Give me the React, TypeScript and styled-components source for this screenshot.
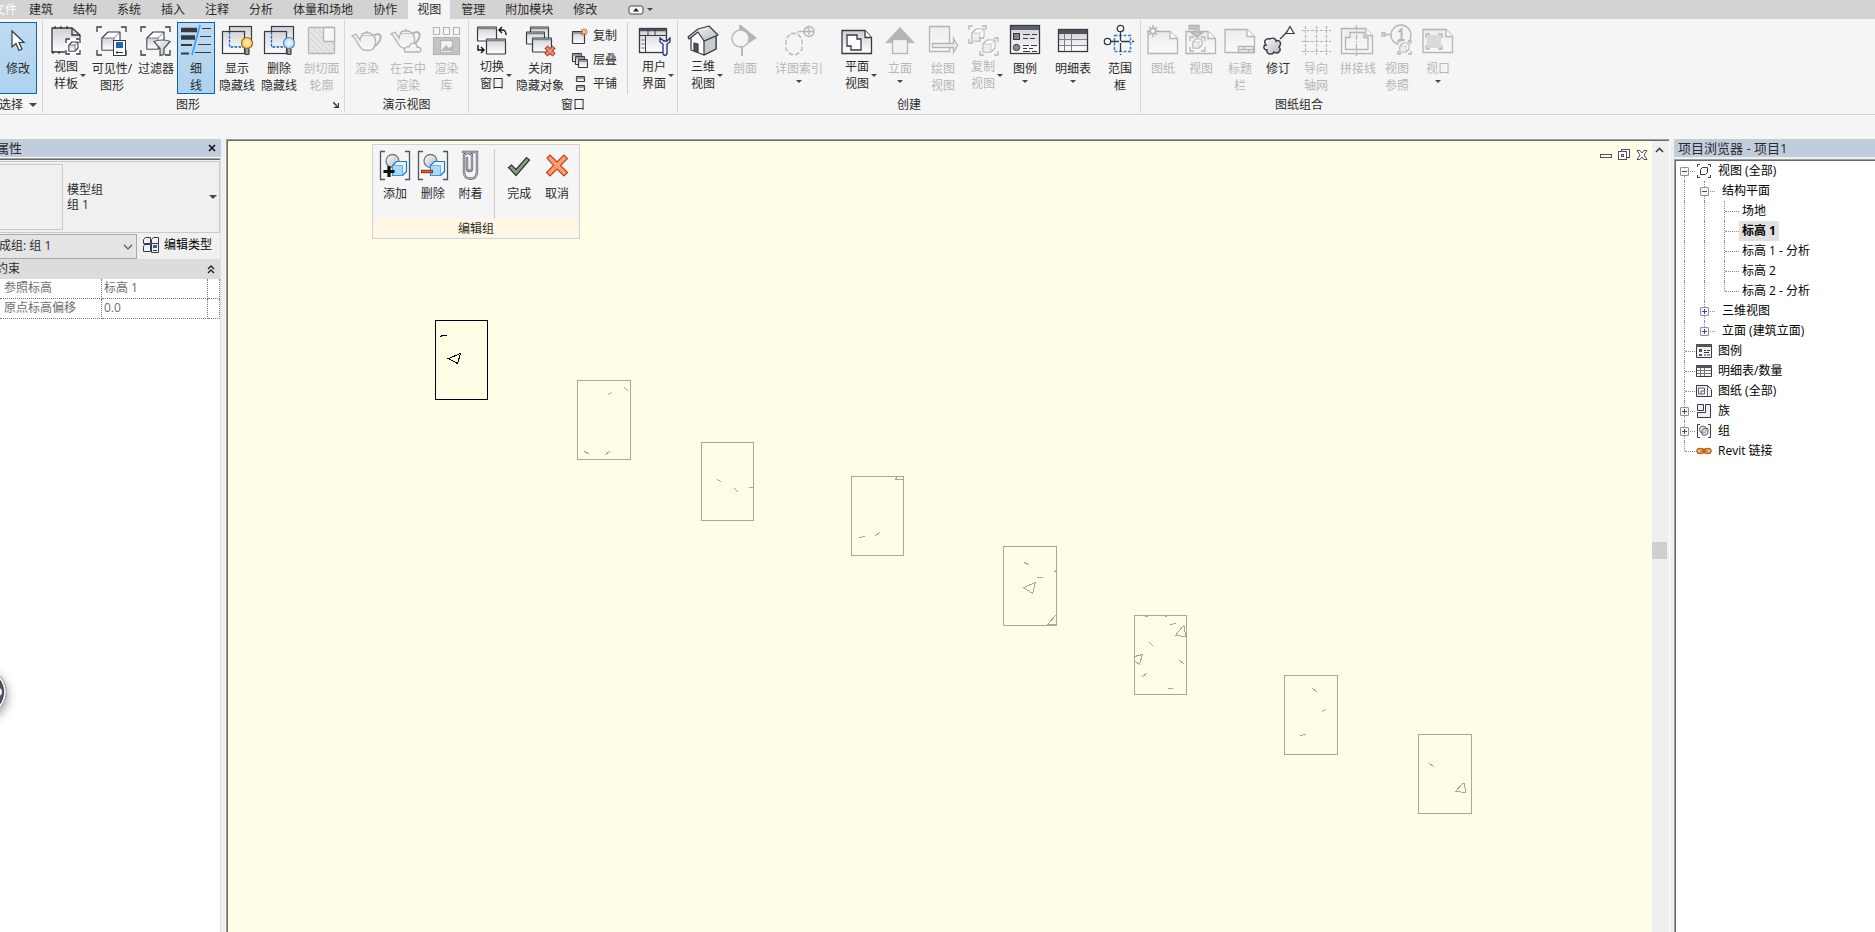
import React from 'react';
import styled, { createGlobalStyle } from 'styled-components';

const GlobalStyle = createGlobalStyle`
  *, *::before, *::after { box-sizing: border-box; }
  body {
    margin: 0;
    background: #f5f5f5;
    color: #2b2b2b;
    font: 12px/16px "Open Sans", "Noto Sans CJK SC", sans-serif;
  }
  button, select, input { font: inherit; color: inherit; }
  button { border: 0; padding: 0; background: none; }
`;

const INK = '#363a42';
const FAINT = '#b3b5b6';

/* ---------- page ---------- */

const Page = styled.div`
  display: flex;
  flex-direction: column;
  min-height: 100vh;
  overflow: hidden;
`;

const GradientStore = styled.svg`
  position: absolute;
  width: 0;
  height: 0;
`;

const TabBar = styled.nav`
  display: flex;
  gap: 2px;
  height: 19px;
  background: #d3d3d3;
  white-space: nowrap;
`;

const Tab = styled.button<{ $active?: boolean }>`
  padding: 0 9px;
  line-height: 18px;
  background: ${p => (p.$active ? '#f5f5f5' : 'transparent')};
`;

const FileTab = styled(Tab)`
  margin-left: -16px;
  padding-right: 1px;
  color: #fff;
`;

const CollapseButton = styled.button`
  display: flex;
  align-items: center;
  gap: 3px;
  margin-left: 20px;
`;

const Ribbon = styled.header`
  display: flex;
  height: 96px;
  padding-top: 1px;
  border-bottom: 1px solid #d0d1d2;
`;

const Group = styled.section`
  display: flex;
  flex-direction: column;
  flex: none;
  border-right: 1px solid #d6d7d8;
  margin-bottom: 1px;
  &:last-child { border-right: 0; padding-left: 0; }
`;

const GroupBody = styled.div`
  display: flex;
  height: 76px;
  padding: 2px 0;
`;

const GroupLabel = styled.div`
  display: flex;
  align-items: center;
  justify-content: center;
  height: 17px;
  line-height: 17px;
`;

const GroupTitle = styled.span`
  flex: 1;
  text-align: center;
`;

const SelectMenu = styled.button`
  display: flex;
  align-items: center;
  gap: 6px;
  margin-left: -6px;
`;

const Launcher = styled.button`
  display: flex;
  width: 11px;
  padding-top: 1px;
`;

const Tool = styled.button<{ $w: number; $active?: boolean }>`
  display: flex;
  flex-direction: column;
  align-items: center;
  width: ${p => p.$w}px;
  height: 72px;
  padding-top: 1px;
  border: 1px solid ${p => (p.$active ? '#0a63bd' : 'transparent')};
  background: ${p => (p.$active ? 'linear-gradient(#c0dbf2, #aed2ef)' : 'none')};
  &:disabled { color: #b6b7b8; }
`;

const ModifyTool = styled(Tool)`
  margin-left: -1px;
  margin-right: 5px;
`;

const ToolIcon = styled.svg`
  flex: none;
  display: block;
  width: 32px;
  height: 32px;
  overflow: visible;
`;

const ToolLabel = styled.span<{ $side?: boolean }>`
  display: grid;
  grid-template-columns: 1fr auto 1fr;
  align-items: center;
  width: 100%;
  margin-top: ${p => (p.$side ? 2 : 4)}px;
  line-height: 17px;
  white-space: pre;
  text-align: center;
`;

const LabelText = styled.span`
  grid-column: 2;
`;

const Arrow = styled.i<{ $side?: boolean; $size?: number }>`
  width: 0;
  height: 0;
  margin: ${p => (p.$side ? '0 0 0 2px' : '3px 0 0')};
  border: ${p => p.$size || 3}px solid transparent;
  border-top-color: #44474c;
  border-bottom: 0;
`;

const PlainArrow = styled(Arrow)`
  margin: 0;
`;

const SmallTools = styled.div`
  display: flex;
  flex-direction: column;
  width: 62px;
  padding-left: 5px;
`;

const SmallTool = styled.button`
  display: flex;
  align-items: center;
  gap: 5px;
  height: 24px;
  padding-top: 4px;
  svg { width: 18px; height: 18px; }
`;

const ToolDivider = styled.i`
  width: 1px;
  margin-right: 3px;
  background: #d0d1d2;
`;

const Workspace = styled.main`
  flex: 1;
  display: flex;
  margin-top: 24px;
  background: #f0f0f0;
`;

/* ---------- properties palette ---------- */

const Properties = styled.aside`
  position: relative;
  display: flex;
  flex-direction: column;
  flex: none;
  width: 221px;
  margin-right: 5px;
  border-right: 1px solid #e0e0e0;
  background: #fff;
`;

const PaletteTitle = styled.h2`
  display: flex;
  align-items: center;
  justify-content: space-between;
  height: 18px;
  margin: 0 -1px 0 0;
  padding: 0 5px 0 4px;
  background: #c0cddc;
  font-size: 13px;
  font-weight: 400;
  line-height: 18px;
`;

const CloseButton = styled.button`
  display: flex;
`;

const Clipped = styled.span<{ $by: number }>`
  margin-left: -${p => p.$by}px;
`;

const PaletteTop = styled.div`
  background: #f0f0f0;
  margin-top: 1px;
  border-top: 1px solid #a0a0a0;
  box-shadow: inset 0 1px #696969;
  padding-top: 2px;
`;

const TypeSelector = styled.div`
  display: flex;
  align-items: center;
  height: 72px;
  padding-right: 2px;
  border: 1px solid #c9cacb;
  border-left: 0;
`;

const Thumbnail = styled.div`
  width: 63px;
  height: 66px;
  margin-right: 4px;
  border: 1px solid #c9cacb;
  border-left: 0;
`;

const TypeName = styled.div`
  flex: 1;
  line-height: 15px;
`;

const InstanceRow = styled.div`
  display: flex;
  align-items: center;
  gap: 6px;
  height: 26px;
`;

const InstanceField = styled.label`
  position: relative;
  display: flex;
  width: 137px;
  svg { position: absolute; right: 4px; top: 9px; pointer-events: none; }
`;

const InstanceSelect = styled.select`
  appearance: none;
  width: 100%;
  height: 25px;
  margin: 0;
  padding: 0 18px 0 0;
  border: 1px solid #a9aaa6;
  border-left: 0;
  border-radius: 0;
  background: #e4e4e4;
  text-indent: -1px;
`;

const EditType = styled.button`
  display: flex;
  align-items: center;
  gap: 5px;
  padding-bottom: 2px;
  color: #000;
`;

const Category = styled.div`
  display: flex;
  align-items: center;
  justify-content: space-between;
  height: 20px;
  padding-right: 5px;
  background: #dcdcdc;
`;

const PropertyTable = styled.table`
  width: 220px;
  border-collapse: separate;
  border-spacing: 0;
  table-layout: fixed;
  color: #6d6d6d;
  th, td {
    height: 20px;
    padding: 0 0 1px 2px;
    border-right: 1px dotted #777;
    border-bottom: 1px dotted #777;
    font-weight: 400;
    text-align: left;
    line-height: 18px;
  }
  th { width: 102px; padding-left: 4px; }
  td:last-child { width: 12px; }
`;

const RecorderBadge = styled.div`
  position: absolute;
  left: -41px;
  top: 529px;
  width: 48px;
  height: 48px;
  border: 1px solid #b9b9b9;
  border-radius: 50%;
  background: #505860;
  box-shadow: inset 0 0 0 2px #f2f2f2, inset 0 0 0 3px #2b3950, 1px 4px 10px rgba(0, 0, 0, 0.35);
  &::after {
    content: '';
    position: absolute;
    right: 4px;
    top: 19px;
    width: 8px;
    height: 8px;
    border-radius: 4px;
    background: #fff;
  }
`;

/* ---------- drawing area ---------- */

const ViewWindow = styled.section`
  flex: 1;
  display: flex;
  min-width: 0;
  border-top: 1px solid #a0a0a0;
  border-left: 1px solid #a0a0a0;
  border-right: 1px solid #fff;
  box-shadow: inset 1px 1px #696969;
  padding: 1px 0 0 1px;
`;

const Canvas = styled.div`
  position: relative;
  flex: 1;
  min-width: 0;
  background: #fffde5;
  border-right: 1px solid #fff;
`;

const Frame = styled.svg`
  position: absolute;
  overflow: visible;
`;

const EditPanel = styled.section`
  position: absolute;
  left: 144px;
  top: 3px;
  width: 208px;
  border: 1px solid #cfd2d4;
  background: #f5f5f5;
`;

const EditTools = styled.div`
  display: flex;
  height: 74px;
  padding: 4px 3px 0;
`;

const EditTool = styled.button`
  display: flex;
  flex-direction: column;
  align-items: center;
  gap: 4px;
  width: 38px;
  line-height: 17px;
`;

const EditDivider = styled.i`
  width: 1px;
  margin: 0 5px;
  background: #cbcccd;
`;

const EditTitle = styled.div`
  height: 18px;
  margin: 0 1px 1px;
  background: #fff7e3;
  line-height: 19px;
  text-align: center;
`;

const WindowButtons = styled.div`
  position: absolute;
  top: 8px;
  right: 3px;
  display: flex;
  gap: 6px;
  button { display: flex; }
`;

const ScrollBar = styled.div`
  display: flex;
  flex-direction: column;
  width: 17px;
  background: #efefef;
`;

const ScrollUp = styled.button`
  height: 18px;
  padding-right: 2px;
  svg { display: block; margin: auto; }
`;

const Track = styled.div`
  flex: 1;
  padding-top: 383px;
`;

const Thumb = styled.div`
  width: 15px;
  height: 17px;
  background: #cdcfd0;
`;

/* ---------- project browser ---------- */

const Browser = styled.aside`
  display: flex;
  flex-direction: column;
  flex: none;
  width: 201px;
  margin-left: 4px;
`;

const Tree = styled.div`
  flex: 1;
  margin-top: 2px;
  border-top: 1px solid #a0a0a0;
  border-left: 1px solid #a0a0a0;
  box-shadow: inset 1px 1px #696969;
  padding: 1px 0 0 1px;
  background: #fff;
`;

const TreeRow = styled.div`
  display: flex;
  align-items: center;
  height: 20px;
  color: #000;
  white-space: pre;
`;

type GuideKind = 'none' | 'pipe' | 'tee' | 'elbow' | 'start';

const Guide = styled.span<{ $kind: GuideKind; $long?: boolean }>`
  position: relative;
  flex: none;
  width: 20px;
  height: 20px;
  &::before {
    content: '';
    position: absolute;
    left: 8px;
    top: ${p => (p.$kind === 'start' ? 10 : 0)}px;
    height: ${p => (p.$kind === 'elbow' || p.$kind === 'start' ? 10 : 20)}px;
    border-left: ${p => (p.$kind === 'none' ? 0 : 1)}px dotted #8c8c8c;
  }
  &::after {
    content: '';
    position: absolute;
    left: 9px;
    top: 10px;
    width: ${p => (p.$long ? 14 : 10)}px;
    border-top: ${p => (p.$kind === 'none' || p.$kind === 'pipe' ? 0 : 1)}px dotted #8c8c8c;
  }
`;

const Expander = styled.button`
  position: absolute;
  z-index: 1;
  left: 4px;
  top: 6px;
  display: flex;
  width: 9px;
  height: 9px;
  border: 1px solid #919191;
  border-radius: 1px;
  background: #f6f6f6;
`;

const TreeIcon = styled.svg`
  flex: none;
  width: 16px;
  height: 16px;
  background: #fff;
`;

const TreeLabel = styled.span<{ $selected?: boolean }>`
  margin-left: 3px;
  padding: 0 3px;
  line-height: 20px;
  font-weight: ${p => (p.$selected ? 700 : 400)};
  background: ${p => (p.$selected ? '#e1e1e1' : 'transparent')};
`;

/* ---------- icons ---------- */

const Defs = () => (
  <GradientStore aria-hidden="true">
    <defs>
      <linearGradient id="pane" x1="0" y1="0" x2="0" y2="1">
        <stop offset="0" stopColor="#cfd0d6" /><stop offset="1" stopColor="#ffffff" />
      </linearGradient>
      <linearGradient id="paneFaint" x1="0" y1="0" x2="0" y2="1">
        <stop offset="0" stopColor="#ececec" /><stop offset="1" stopColor="#fafafa" />
      </linearGradient>
      <linearGradient id="metal" x1="0" y1="0" x2="1" y2="1">
        <stop offset="0" stopColor="#ffffff" /><stop offset="1" stopColor="#b2b5ba" />
      </linearGradient>
      <radialGradient id="gold"><stop offset="0" stopColor="#fff6cc" /><stop offset="1" stopColor="#fbc64b" /></radialGradient>
      <radialGradient id="blueBulb"><stop offset="0" stopColor="#ffffff" /><stop offset="1" stopColor="#a9d5f7" /></radialGradient>
    </defs>
  </GradientStore>
);

const Brackets = ({ x, y, w, h, l = 6, c = INK }: { x: number; y: number; w: number; h: number; l?: number; c?: string }) => (
  <path fill="none" stroke={c} strokeWidth="1.3"
    d={`M${x} ${y + l}v${-l}h${l}M${x + w - l} ${y}h${l}v${l}M${x + w} ${y + h - l}v${l}h${-l}M${x + l} ${y + h}h${-l}v${-l}`} />
);

const Cube = ({ x, y, s, c = INK, f = 'url(#pane)' }: { x: number; y: number; s: number; c?: string; f?: string }) => {
  const d = Math.round(s * 0.35);
  return (
    <g stroke={c} strokeWidth="1.1" strokeLinejoin="round">
      <path fill="#fff" d={`M${x} ${y + d}l${d} ${-d}h${s - d}v${s - d}l${-d} ${d}h${d - s}z`} />
      <path fill={f} d={`M${x} ${y + d}h${s - d}v${s - d}h${d - s}z`} strokeOpacity="0.6" />
      <path fill="none" strokeOpacity="0.4" d={`M${x + s - d} ${y + d}l${d} ${-d}`} />
    </g>
  );
};

const Bulb = ({ fill, line }: { fill: string; line: string }) => (
  <g strokeWidth="1.2">
    <rect x="24" y="24" width="4" height="6.5" rx="1" fill="#9ba0a6" stroke={INK} />
    <circle cx="26" cy="19" r="5.5" fill={fill} stroke={line} />
  </g>
);

const hiddenLines = (bulb: React.ReactNode) => (
  <g>
    <rect x="8.5" y="2.5" width="22" height="20" fill="url(#pane)" stroke={INK} strokeWidth="1.2" />
    <rect x="1.5" y="7.5" width="22" height="22" fill="url(#pane)" fillOpacity="0.8" stroke={INK} strokeWidth="1.2" />
    <path d="M8.500 8v15h14" fill="none" stroke="#1567c2" strokeWidth="1.3" strokeDasharray="2.5 1.5" />
    {bulb}
  </g>
);

const Teapot = ({ x = 0, y = 0 }: { x?: number; y?: number }) => (
  <g transform={`translate(${x} ${y})`} stroke={FAINT} strokeWidth="1.3" fill="url(#paneFaint)">
    <path d="M22 12c6-4 9-1 7 4-1 3-5 6-7 7" fill="none" strokeWidth="2" />
    <path d="M1 12l4-2 4 6c0-3 1-4 3-5h10c4 4 3 10 0 14-3 2-8 2-11 0-5-4-5-10-10-13z" />
    <path d="M10 11c3-3 9-3 12 0M15 8h2" />
  </g>
);

const Win = ({ x, y, w, h }: { x: number; y: number; w: number; h: number }) => (
  <g>
    <rect x={x} y={y} width={w} height={h} rx="0.5" fill="url(#pane)" stroke={INK} strokeWidth="1.2" />
    <path d={`M${x} ${y + 1.5}h${w}`} stroke="#7d8188" strokeWidth="1.5" />
  </g>
);

const sheetD = 'M1 7.500h22l7.500 7v15H1z';

const solid = (mark: React.ReactNode) => (
  <g>
    <path d="M6 2.500H1.500v28H6M26 2.500h4.500v28H26" fill="none" stroke="#50555e" strokeWidth="1.3" />
    <circle cx="13.500" cy="12" r="6.500" fill="url(#metal)" stroke="#747982" strokeWidth="1.3" />
    <path d="M13.500 16.500l4-4h10v10l-4 4h-10z" fill="#eaf6ff" stroke="#187bd0" strokeWidth="1.2" strokeLinejoin="round" />
    <path d="M13.500 16.500h10v10h-10z" fill="#a9d8fa" stroke="#187bd0" strokeOpacity="0.5" />
    {mark}
  </g>
);

const icons: Record<string, React.ReactNode> = {
  cursor: <path d="M10 7v16l4-3.500 3 7 3-1.500-3-6.500h5z" fill="#fff" stroke={INK} strokeWidth="1.2" />,
  template: (
    <g stroke={INK} strokeWidth="1.3">
      <path d="M2 4h20l8 7v17H2z" fill="url(#pane)" />
      <path d="M22 4v7h8M5 2v3M11 2v3M17 2v3M3 27v3M9 27v3" fill="none" />
      <rect x="15" y="14" width="17" height="18" fill="#fff" stroke="none" />
      <Brackets x={16} y={15} w={14} h={15} l={4} />
      <Cube x={19} y={18} s={9} />
    </g>
  ),
  visibility: (
    <g>
      <Brackets x={1} y={3} w={29} h={28} l={5} />
      <Cube x={6} y={8} s={18} />
      <rect x="17.5" y="16.5" width="12" height="15" fill="#fff" stroke={INK} />
      <rect x="20" y="18" width="7" height="6" fill="#2563b8" />
      <path d="M20 28.500h7M21 27v3" stroke={INK} />
    </g>
  ),
  filter: (
    <g>
      <Brackets x={1} y={3} w={29} h={28} l={5} />
      <Cube x={7} y={8} s={17} />
      <path d="M14 17.500c4-2 13-2 16 0l-6 7v6l-4 1v-7z" fill="url(#metal)" stroke="#4b4f57" strokeWidth="1.2" />
    </g>
  ),
  thin: (
    <g>
      <path d="M1 6h16M1 13.500h14" stroke={INK} strokeWidth="4.5" />
      <path d="M1 21h11M1 29.500h8" stroke={INK} strokeWidth="2.2" />
      <path d="M22 4.500h9M20 12.500h11M18 20.500h13M15 28.500h16" stroke={INK} strokeWidth="1.2" />
      <path d="M20 1L12 31" stroke="#4aa3ee" strokeWidth="1.8" />
    </g>
  ),
  showHidden: hiddenLines(<Bulb fill="url(#gold)" line="#a9690f" />),
  removeHidden: hiddenLines(<Bulb fill="url(#blueBulb)" line="#4f8cc4" />),
  cutProfile: (
    <g stroke={FAINT} strokeWidth="1.3" fill="none">
      <rect x="2.5" y="3.5" width="26" height="26" rx="1" fill="#e6e6e6" />
      <path d="M4 8l21 21M4 14l15 15M4 20l9 9M8 6l20 20M12 5l16 16M4 25l4 4" strokeOpacity="0.5" strokeWidth="1" />
      <path d="M17.500 3.500h11v14h-11z" fill="#f7f7f7" />
    </g>
  ),
  teapot: <Teapot />,
  cloudTeapot: (
    <g>
      <Teapot x={-1} y={-2} />
      <path d="M14 28c-2-4 2-6 4-5 2-6 8-4 8 0 5 0 5 5 2 5z" fill="#f5f5f5" stroke={FAINT} strokeWidth="1.3" />
    </g>
  ),
  gallery: (
    <g stroke={FAINT} strokeWidth="1.2">
      <path d="M2.500 3.500h6v7h-6zM12.500 3.500h6v7h-6zM22.500 3.500h6v7h-6z" fill="#f8f8f8" />
      <rect x="2.5" y="13.5" width="26" height="17" fill="#c3c4c5" />
      <rect x="9.5" y="16.5" width="12" height="12" fill="#f4f4f4" />
      <path d="M10 27l5-6 3 3 3-2v5z" fill="#b5b6b7" stroke="none" />
    </g>
  ),
  switchWin: (
    <g>
      <Win x={1.5} y={3} w={19} h={14} /><Win x={10.5} y={15} w={19} h={15} />
      <path d="M23 6h3c3 0 4 1 4 5M26 3l-3 3 3 3M2 21v5h6M5 23l3 3-3 3" fill="none" stroke="#111" strokeWidth="1.4" />
    </g>
  ),
  closeHidden: (
    <g>
      <Win x={6.5} y={3} w={18} h={12} /><Win x={2.5} y={8} w={18} h={12} /><Win x={8.5} y={14} w={19} h={14} />
      <path d="M22 23l8 8M30 23l-8 8" stroke="#9c2d16" strokeWidth="4.5" />
      <path d="M22.500 23.500l7 7M29.500 23.500l-7 7" stroke="#f58a68" strokeWidth="2.5" />
    </g>
  ),
  userInterface: (
    <g>
      <rect x="1.5" y="4.5" width="27" height="24" fill="url(#pane)" stroke={INK} strokeWidth="1.3" />
      <path d="M2 6h27" stroke="#4c5058" strokeWidth="2.5" />
      <path d="M2 11.500h26M7.500 11.500v17M10 5v6M17 5v6" stroke={INK} />
      <path d="M3.500 16h3M3.500 20h3M3.500 24h3" stroke="#666" />
      <path d="M22 14v4l3 2v9c0 3 4 3 4 0v-9l3-2v-4l-3 3h-3z" fill="#eef1fa" stroke="#27306c" strokeWidth="1.3" />
    </g>
  ),
  house: (
    <g stroke={INK} strokeWidth="1.2" strokeLinejoin="round">
      <path d="M4 13v13l13 5 12-6V13L13 5z" fill="#fdfdfd" />
      <path d="M17 17v14l12-6V12z" fill="#c7ccd0" />
      <path d="M1 13L11 5l11-3 9 9-14 6-6-9-9 7z" fill="url(#metal)" />
      <path d="M7 19l4 1v8l-4-1.500z" fill="#4f5560" />
    </g>
  ),
  section: (
    <g>
      <path d="M10 1h2l16 13-14 9v9h-2V24z" fill={FAINT} />
      <circle cx="11.500" cy="14.500" r="8.500" fill="#f4f4f4" stroke={FAINT} strokeWidth="1.3" />
    </g>
  ),
  callout: (
    <g stroke={FAINT} strokeWidth="1.3" fill="none">
      <path d="M8 9.500h6l5 5v11l-5 5H8l-5-5v-11z" strokeDasharray="5 2" />
      <path d="M14 8.500l3-1h14" /><circle cx="26" cy="7.500" r="5" /><path d="M26 4v7M24 5l2-1" />
    </g>
  ),
  plan: (
    <g stroke={INK} strokeWidth="1.3">
      <path d="M1 6.500h23l6.500 7v16H1z" fill="url(#pane)" /><path d="M24 6.500v7h6.500" fill="#fff" />
      <path d="M6 11h10v4h4v11h-10v-4H6z" fill="#fff" />
    </g>
  ),
  elevation: (
    <g><path d="M16 3L31 19H1z" fill={FAINT} /><rect x="8.5" y="15.5" width="15" height="14" fill="#f1f1f1" stroke={FAINT} strokeWidth="1.3" /></g>
  ),
  drafting: (
    <g stroke={FAINT} strokeWidth="1.3">
      <path d="M2.500 2.500h20v25h-20z" fill="url(#paneFaint)" />
      <path d="M5.500 19.500h21v-5l4 7-4 7v-5h-21z" fill="#f0f0f0" />
    </g>
  ),
  duplicate: (
    <g>
      <Brackets x={1} y={2} w={17} h={17} l={4} c={FAINT} /><Cube x={4} y={5} s={12} c={FAINT} f="#eee" />
      <rect x="12" y="14" width="18" height="17" fill="#f5f5f5" />
      <Brackets x={12} y={14} w={18} h={17} l={4} c={FAINT} /><Cube x={15} y={16} s={12} c={FAINT} f="#eee" />
    </g>
  ),
  legend: (
    <g>
      <rect x="1.5" y="1.5" width="29" height="28" fill="url(#pane)" stroke={INK} strokeWidth="1.3" />
      <path d="M2 4h28" stroke="#5b5f66" strokeWidth="4" />
      <rect x="4.5" y="9.5" width="6" height="6" fill="#7e8289" stroke={INK} />
      <circle cx="7.500" cy="23.500" r="3.2" fill="#8b8f95" stroke={INK} />
      <path d="M14 10.500h7M23 10.500h5M14 14.500h5M21 14.500h5M14 21.500h6M22 21.500h6M14 24.500h4M20 24.500h4M14 27.500h7M23 27.500h5" stroke={INK} />
    </g>
  ),
  schedule: (
    <g>
      <rect x="1.5" y="5.5" width="29" height="22" fill="url(#pane)" stroke={INK} strokeWidth="1.3" />
      <path d="M2 8h28" stroke="#50545c" strokeWidth="4" />
      <path d="M2 15.500h28M2 21.500h28M7.500 10v17M14.500 10v17" stroke="#7b7f86" />
    </g>
  ),
  scopeBox: (
    <g fill="none" stroke={INK} strokeWidth="1.3">
      <rect x="10.5" y="11.5" width="16" height="16" stroke="#2f87d6" strokeWidth="1.5" strokeDasharray="3 1.5" />
      <path d="M6 17.500h24M16.500 8v23" strokeDasharray="9 2" />
      <circle cx="16.500" cy="4.500" r="3.2" fill="#fff" /><circle cx="3.500" cy="17.500" r="3.2" fill="#fff" />
    </g>
  ),
  sheet: (
    <g stroke={FAINT} strokeWidth="1.3">
      <path d={sheetD} fill="url(#paneFaint)" /><path d="M23 7.500v7h7.500" fill="#fff" />
      <path d="M6 1v12M0 7h12M2 3l8 8M10 3l-8 8" strokeWidth="1.5" /><circle cx="6" cy="7" r="2.5" fill="#fff" />
    </g>
  ),
  placeView: (
    <g stroke={FAINT} strokeWidth="1.3">
      <path d={sheetD} fill="url(#paneFaint)" /><path d="M23 7.500v7h7.500" fill="#fff" />
      <path d="M4 1.500h10v7h4l-6 5-6-5h4V5H4z" fill="#c4c5c6" />
      <Brackets x={5} y={13} w={15} h={14} l={4} c={FAINT} /><Cube x={8} y={15} s={9} c={FAINT} f="#eee" />
    </g>
  ),
  titleBlock: (
    <g stroke={FAINT} strokeWidth="1.3">
      <path d="M1 5.500h22l7.500 7v16H1z" fill="url(#paneFaint)" /><path d="M23 5.500v7h7.500" fill="#fff" />
      <path d="M14.500 22.500h15v6h-15zM14.500 25.500h15M20 22.500v3M25 25.500v3" fill="none" />
    </g>
  ),
  revision: (
    <g stroke={INK} strokeWidth="1.2">
      <path d="M18 15l8-8" /><path d="M28 2.500l4 7h-8z" fill="#fff" />
      <path d="M9 15c3-2 6 0 6 2 4-2 6 3 3 6 3 3-1 8-5 5-1 3-8 3-7-2-4 0-4-5-1-5-3-4 0-7 4-6z" fill="url(#metal)" strokeWidth="1.4" transform="translate(-1 0)" />
    </g>
  ),
  guideGrid: (
    <path d="M5.500 2v29M16.500 2v29M26.500 2v29M2 6.500h29M2 17.500h29M2 27.500h29" fill="none" stroke={FAINT} strokeWidth="1.2" strokeDasharray="3 1.5" />
  ),
  matchline: (
    <g stroke={FAINT} strokeWidth="1.3" fill="none">
      <path d="M.5 4.500h24l7 7v18H.5z" fill="url(#paneFaint)" /><path d="M25 4.500v7h6.500" fill="#fff" />
      <path d="M9 8.500h14v5h4v12H4.500v-12H9z" /><path d="M15.500 1v31" strokeDasharray="5 1.5 1.5 1.5" />
    </g>
  ),
  viewRef: (
    <g stroke={FAINT} strokeWidth="1.3" fill="#f3f3f3">
      <circle cx="20" cy="11" r="10" /><path d="M4 10.500h6M1 9h3v3H1z" />
      <path d="M17.500 8l3-2.500V16M17.500 16h6" fill="none" strokeWidth="2" />
      <rect x="17" y="17" width="14" height="14" stroke="none" fill="#f5f5f5" />
      <Brackets x={17} y={17} w={13} h={13} l={3} c={FAINT} /><Cube x={19} y={19} s={9} c={FAINT} f="#eee" />
    </g>
  ),
  viewport: (
    <g stroke={FAINT} strokeWidth="1.3">
      <path d="M1 5.500h23l6.500 7v16H1z" fill="url(#paneFaint)" /><path d="M24 5.500v7h6.500" fill="#fff" />
      <rect x="5" y="11" width="14" height="13" fill="#d9dadb" stroke="none" /><Brackets x={4} y={10} w={16} h={15} l={4} c={FAINT} />
    </g>
  ),
  addToGroup: solid(<path d="M10 17v11M4.500 22.500h11" stroke="#0b130c" strokeWidth="3.2" />),
  removeFromGroup: solid(
    <g>
      <path d="M4 22.500h12" stroke="#8f2f18" strokeWidth="3.4" />
      <path d="M5 22.500h10" stroke="#e0694a" strokeWidth="1.4" />
    </g>
  ),
  attach: (
    <g fill="none" strokeLinecap="round">
      <path d="M13 9v10c0 4 5 4 5 0V7c0-4-8-4-8 0v16c0 9 13 9 13 0V3H9" stroke="#5a5e65" strokeWidth="2.4" />
      <path d="M13 9v10c0 4 5 4 5 0V7c0-4-8-4-8 0v16c0 9 13 9 13 0V3H9" stroke="#d8dadc" strokeWidth="0.9" />
    </g>
  ),
  finish: <path d="M5.500 18.500l3-2.500 4.500 4.500L23.500 8.500l3 2.500L13 26.500z" fill="#8c9d89" stroke="#2c382e" strokeWidth="1.2" />,
  cancel: <path d="M6 9l3-3 7 7 7-7 3.500 3.500-7 7 7 7L23 27l-7-7-7 7-3.500-3.500 7-7z" fill="#ff9c72" stroke="#b5401c" strokeWidth="1.1" />,
};

const treeIcons: Record<string, React.ReactNode> = {
  views: <g><path d="M1.500 4V1.500H4M12 1.500h2.500V4M14.500 12v2.500H12M4 14.500H1.500V12" fill="none" stroke={INK} /><path d="M4.500 6.500l2-2h5v5l-2 2h-5z" fill="#fff" stroke={INK} /></g>,
  legend: <g><path d="M.5 1.500h15v13H.5z" fill="#f3f3f5" stroke={INK} /><path d="M0 2.500h16" stroke="#50545c" strokeWidth="3" /><path d="M3 6h3v3H3zM3 11h3v2H3z" fill="#555" /><path d="M8 7.500h2M11 7.500h3M8 9.500h5M8 12h2M11 12h3" stroke={INK} /></g>,
  schedule: <g><path d="M.5 2.500h15v11H.5z" fill="#f3f3f5" stroke={INK} /><path d="M0 3.500h16" stroke="#50545c" strokeWidth="3" /><path d="M1 7.500h14M1 10.500h14M4.500 5v8M8.500 5v8" stroke="#777" /></g>,
  sheets: <g fill="none" stroke={INK}><path d="M.5 2.500h11l4 4v7H.5z" fill="#f3f3f5" /><path d="M11.500 2.500v11M2.500 5h6v6h-6zM5 11V8h3" stroke="#666" /></g>,
  families: <g fill="#f1f1f4" stroke={INK}><path d="M1.500 1.500h6v6h-6zM9.500 1.500h5v13h-13v-5h8z" /></g>,
  groups: <g fill="none" stroke={INK}><path d="M4 1.500H1.500v13H4M12 1.500h2.500v13H12" /><circle cx="7" cy="6.500" r="3.5" fill="#e5e5e8" stroke="#666" /><path d="M6 7l2-1.500h4V10l-1.500 2H6z" fill="#ccc" fillOpacity="0.6" stroke="#666" /></g>,
  link: <g fill="#f9d6a0" stroke="#b8641a" strokeWidth="1.5"><ellipse cx="4.500" cy="8" rx="3.5" ry="2.5" /><ellipse cx="11.500" cy="8" rx="3.5" ry="2.5" /><path d="M4 8h8" /></g>,
};

/* ---------- data ---------- */

type ToolSpec = { icon: string; label: string; w: number; off?: boolean; active?: boolean; menu?: 'side' | 'below' };

const graphics: ToolSpec[] = [
  { icon: 'template', label: '视图\n样板', w: 46, menu: 'side' },
  { icon: 'visibility', label: '可见性/\n图形', w: 46 },
  { icon: 'filter', label: '过滤器', w: 42 },
  { icon: 'thin', label: '细\n线', w: 38, active: true },
  { icon: 'showHidden', label: '显示\n隐藏线', w: 44 },
  { icon: 'removeHidden', label: '删除\n隐藏线', w: 40 },
  { icon: 'cutProfile', label: '剖切面\n轮廓', w: 45, off: true },
];
const presentation: ToolSpec[] = [
  { icon: 'teapot', label: '渲染', w: 44, off: true },
  { icon: 'cloudTeapot', label: '在云中\n渲染', w: 36, off: true },
  { icon: 'gallery', label: '渲染\n库', w: 43, off: true },
];
const windows: ToolSpec[] = [
  { icon: 'switchWin', label: '切换\n窗口', w: 46, menu: 'side' },
  { icon: 'closeHidden', label: '关闭\n隐藏对象', w: 50 },
];
const create: ToolSpec[] = [
  { icon: 'house', label: '三维\n视图', w: 50, menu: 'side' },
  { icon: 'section', label: '剖面', w: 34, off: true },
  { icon: 'callout', label: '详图索引', w: 74, off: true, menu: 'below' },
  { icon: 'plan', label: '平面\n视图', w: 42, menu: 'side' },
  { icon: 'elevation', label: '立面', w: 44, off: true, menu: 'below' },
  { icon: 'drafting', label: '绘图\n视图', w: 42, off: true },
  { icon: 'duplicate', label: '复制\n视图', w: 40, off: true, menu: 'side' },
  { icon: 'legend', label: '图例', w: 42, menu: 'below' },
  { icon: 'schedule', label: '明细表', w: 54, menu: 'below' },
  { icon: 'scopeBox', label: '范围\n框', w: 40 },
];
const sheets: ToolSpec[] = [
  { icon: 'sheet', label: '图纸', w: 44, off: true },
  { icon: 'placeView', label: '视图', w: 32, off: true },
  { icon: 'titleBlock', label: '标题\n栏', w: 46, off: true },
  { icon: 'revision', label: '修订', w: 30 },
  { icon: 'guideGrid', label: '导向\n轴网', w: 46, off: true },
  { icon: 'matchline', label: '拼接线', w: 36, off: true },
  { icon: 'viewRef', label: '视图\n参照', w: 44, off: true },
  { icon: 'viewport', label: '视口', w: 38, off: true, menu: 'below' },
];

const frames = [
  { x: 207, y: 179, w: 52, h: 79, active: true, d: 'M5 16h1M6 15H11M13 38L25 33L22 43Z' },
  { x: 349, y: 239, w: 53, h: 79, d: 'M31 14L34 12M47 7L50 10M7 71L11 73M28 74L32 71' },
  { x: 473, y: 301, w: 52, h: 78, d: 'M16 37L19 39M33 46L36 49M48 45H52' },
  { x: 623, y: 335, w: 52, h: 79, d: 'M45 1L44 3H52M8 61L13 60M24 59L28 56' },
  { x: 775, y: 405, w: 53, h: 79, d: 'M21 16L25 18M34 31H39M51 25L53 24M20 41L32 36L29 47ZM53 68L44 78H53' },
  { x: 906, y: 474, w: 52, h: 79, d: 'M11 1H13M31 1H32M36 9L41 8M41 20L48 11H50L51 21ZM15 27L18 30M0 41L8 39L5 49L1 46M45 45L49 48M8 61L12 58M34 73H38' },
  { x: 1056, y: 534, w: 53, h: 79, d: 'M28 13L32 16M38 36L41 34M16 60L21 59' },
  { x: 1190, y: 593, w: 53, h: 79, d: 'M11 29L15 32M37 57L44 49H46L47 58Z' },
];

type Node = { guides: GuideKind[]; label: string; icon?: string; toggle?: '+' | '-'; selected?: boolean };

const tree: Node[] = [
  { guides: ['start'], label: '视图 (全部)', icon: 'views', toggle: '-' },
  { guides: ['pipe', 'tee'], label: '结构平面', toggle: '-' },
  { guides: ['pipe', 'pipe', 'tee'], label: '场地' },
  { guides: ['pipe', 'pipe', 'tee'], label: '标高 1', selected: true },
  { guides: ['pipe', 'pipe', 'tee'], label: '标高 1 - 分析' },
  { guides: ['pipe', 'pipe', 'tee'], label: '标高 2' },
  { guides: ['pipe', 'pipe', 'elbow'], label: '标高 2 - 分析' },
  { guides: ['pipe', 'tee'], label: '三维视图', toggle: '+' },
  { guides: ['pipe', 'elbow'], label: '立面 (建筑立面)', toggle: '+' },
  { guides: ['tee'], label: '图例', icon: 'legend' },
  { guides: ['tee'], label: '明细表/数量', icon: 'schedule' },
  { guides: ['tee'], label: '图纸 (全部)', icon: 'sheets' },
  { guides: ['tee'], label: '族', icon: 'families', toggle: '+' },
  { guides: ['tee'], label: '组', icon: 'groups', toggle: '+' },
  { guides: ['elbow'], label: 'Revit 链接', icon: 'link' },
];

const tabs = ['建筑', '结构', '系统', '插入', '注释', '分析', '体量和场地', '协作', '视图', '管理', '附加模块', '修改'];

/* ---------- parts ---------- */

const Icon = ({ name }: { name: string }) => (
  <ToolIcon viewBox="0 0 32 32" aria-hidden="true">{icons[name]}</ToolIcon>
);

const RibbonTool = ({ icon, label, w, off, active, menu }: ToolSpec) => (
  <Tool $w={w} $active={active} disabled={off}>
    <Icon name={icon} />
    <ToolLabel $side={menu === 'side'}>
      <LabelText>{label}</LabelText>
      {menu === 'side' && <Arrow $side />}
    </ToolLabel>
    {menu === 'below' && <Arrow />}
  </Tool>
);

const ToolGroup = ({ title, tools, launcher, children }: { title: string; tools: ToolSpec[]; launcher?: boolean; children?: React.ReactNode }) => (
  <Group>
    <GroupBody>
      {tools.map(t => <RibbonTool key={t.icon} {...t} />)}
      {children}
    </GroupBody>
    <GroupLabel>
      <GroupTitle>{title}</GroupTitle>
      {launcher && (
        <Launcher aria-label="图形显示选项">
          <svg width="6" height="6"><path d="M0 0l5 5M5.500 1v4.500H1" fill="none" stroke="#333" strokeWidth="1.4" /></svg>
        </Launcher>
      )}
    </GroupLabel>
  </Group>
);

const BrowserRow = ({ guides, label, icon, toggle, selected }: Node) => (
  <TreeRow role="treeitem" aria-level={guides.length} aria-selected={!!selected}>
    {guides.map((kind, i) => {
      const last = i === guides.length - 1;
      return (
        <Guide key={i} $kind={kind} $long={guides.length === 3}>
          {last && toggle && (
            <Expander aria-label={toggle === '+' ? '展开' : '折叠'}>
              <svg width="7" height="7"><path d={toggle === '+' ? 'M1 3.500h5M3.500 1v5' : 'M1 3.500h5'} stroke="#2f4f9a" /></svg>
            </Expander>
          )}
        </Guide>
      );
    })}
    {icon && <TreeIcon viewBox="0 0 16 16" aria-hidden="true">{treeIcons[icon]}</TreeIcon>}
    <TreeLabel $selected={selected}>{label}</TreeLabel>
  </TreeRow>
);

export default function App() {
  return (
    <Page>
      <GlobalStyle />
      <Defs />
      <TabBar>
        <FileTab>文件</FileTab>
        {tabs.map(t => <Tab key={t} $active={t === '视图'}>{t}</Tab>)}
        <CollapseButton aria-label="最小化功能区">
          <svg width="16" height="10"><rect x="1" y="1" width="14" height="8" rx="2" fill="#f5f5f5" stroke="#444a58" /><path d="M8 3l3 3.500H5z" fill="#222" /></svg>
          <PlainArrow />
        </CollapseButton>
      </TabBar>

      <Ribbon>
        <Group>
          <GroupBody>
            <ModifyTool $w={38} $active>
              <Icon name="cursor" />
              <ToolLabel><LabelText>修改</LabelText></ToolLabel>
            </ModifyTool>
          </GroupBody>
          <GroupLabel>
            <SelectMenu>选择<PlainArrow $size={4} /></SelectMenu>
          </GroupLabel>
        </Group>
        <ToolGroup title="图形" tools={graphics} launcher />
        <ToolGroup title="演示视图" tools={presentation} />
        <ToolGroup title="窗口" tools={windows}>
          <SmallTools>
            <SmallTool>
              <svg><Win x={2.5} y={4.5} w={12} h={12} /><path d="M14 1v8M10 5h8M11 2l6 6M17 2l-6 6" stroke="#b0562c" /><circle cx="14" cy="5" r="1.5" fill="#ffd9a0" /></svg>复制
            </SmallTool>
            <SmallTool>
              <svg><Win x={2.5} y={2.5} w={9} h={8} /><Win x={5.5} y={5.5} w={9} h={8} /><Win x={8.5} y={8.5} w={9} h={8} /></svg>层叠
            </SmallTool>
            <SmallTool>
              <svg><Win x={6.5} y={1.5} w={8} h={5} /><Win x={6.5} y={10.5} w={8} h={5} /></svg>平铺
            </SmallTool>
          </SmallTools>
          <ToolDivider />
          <RibbonTool icon="userInterface" label={'用户\n界面'} w={46} menu="side" />
        </ToolGroup>
        <ToolGroup title="创建" tools={create} />
        <ToolGroup title="图纸组合" tools={sheets} />
      </Ribbon>

      <Workspace>
        <Properties>
          <PaletteTitle>
            <Clipped $by={8}>属性</Clipped>
            <CloseButton aria-label="关闭"><svg width="8" height="8"><path d="M1 1l6 6M7 1L1 7" stroke="#111" strokeWidth="1.6" /></svg></CloseButton>
          </PaletteTitle>
          <PaletteTop>
            <TypeSelector>
              <Thumbnail />
              <TypeName>模型组<br />组 1</TypeName>
              <PlainArrow $size={4} />
            </TypeSelector>
            <InstanceRow>
              <InstanceField>
                <InstanceSelect aria-label="实例"><option>成组: 组 1</option></InstanceSelect>
                <svg width="10" height="8"><path d="M1 2l4 4 4-4" fill="none" stroke="#555" strokeWidth="1.2" /></svg>
              </InstanceField>
              <EditType>
                <svg width="16" height="16"><g fill="#f2f2f4" stroke={INK}><path d="M.5 2.500l2-2h5v6h-7zM8.500 2.500l2-2h5v6h-7zM.5 9.500l1-2h6v7h-7z" /><path d="M8.500 6.500h7v9h-7z" /></g><path d="M10 8h4v3h-4z" fill="#2563b8" /><path d="M10 13.500h4" stroke={INK} /></svg>
                编辑类型
              </EditType>
            </InstanceRow>
          </PaletteTop>
          <Category>
            <Clipped $by={4}>约束</Clipped>
            <svg width="8" height="9"><path d="M1 4l3-3 3 3M1 8l3-3 3 3" fill="none" stroke="#222" strokeWidth="1.3" /></svg>
          </Category>
          <PropertyTable>
            <tbody>
              <tr><th scope="row">参照标高</th><td>标高 1</td><td /></tr>
              <tr><th scope="row">原点标高偏移</th><td>0.0</td><td /></tr>
            </tbody>
          </PropertyTable>
          <RecorderBadge />
        </Properties>

        <ViewWindow>
          <Canvas>
            {frames.map(f => (
              <Frame key={f.x} width={f.w + 1} height={f.h + 1} style={{ left: f.x, top: f.y }} shapeRendering="crispEdges">
                <g transform="translate(.5 .5)" fill="none" stroke={f.active ? '#000' : '#a9a896'}>
                  <rect width={f.w} height={f.h} /><path d={f.d} strokeLinecap="square" />
                </g>
              </Frame>
            ))}
            <EditPanel>
              <EditTools>
                <EditTool><Icon name="addToGroup" />添加</EditTool>
                <EditTool><Icon name="removeFromGroup" />删除</EditTool>
                <EditTool><Icon name="attach" />附着</EditTool>
                <EditDivider />
                <EditTool><Icon name="finish" />完成</EditTool>
                <EditTool><Icon name="cancel" />取消</EditTool>
              </EditTools>
              <EditTitle>编辑组</EditTitle>
            </EditPanel>
            <WindowButtons>
              <button aria-label="最小化"><svg width="12" height="12"><rect x=".5" y="5.5" width="11" height="3" fill="#fff" stroke="#555060" /></svg></button>
              <button aria-label="还原"><svg width="12" height="12"><g fill="#fff" stroke="#555060"><rect x="3.5" y=".5" width="8" height="8" /><rect x=".5" y="2.5" width="8" height="8" /><rect x="3.5" y="5.5" width="2" height="2" /></g></svg></button>
              <button aria-label="关闭视图"><svg width="12" height="12"><path d="M1 1.500h3l2 2.500 2-2.500h3L8 6l3 4.500H8L6 8l-2 2.500H1L4 6z" fill="#fff" stroke="#555060" /></svg></button>
            </WindowButtons>
          </Canvas>
          <ScrollBar>
            <ScrollUp aria-label="向上滚动"><svg width="9" height="6"><path d="M1 5l3.500-3.500L8 5" fill="none" stroke="#444" strokeWidth="1.6" /></svg></ScrollUp>
            <Track><Thumb /></Track>
          </ScrollBar>
        </ViewWindow>

        <Browser>
          <PaletteTitle>项目浏览器 - 项目1</PaletteTitle>
          <Tree role="tree">
            {tree.map(n => <BrowserRow key={n.label} {...n} />)}
          </Tree>
        </Browser>
      </Workspace>
    </Page>
  );
}
